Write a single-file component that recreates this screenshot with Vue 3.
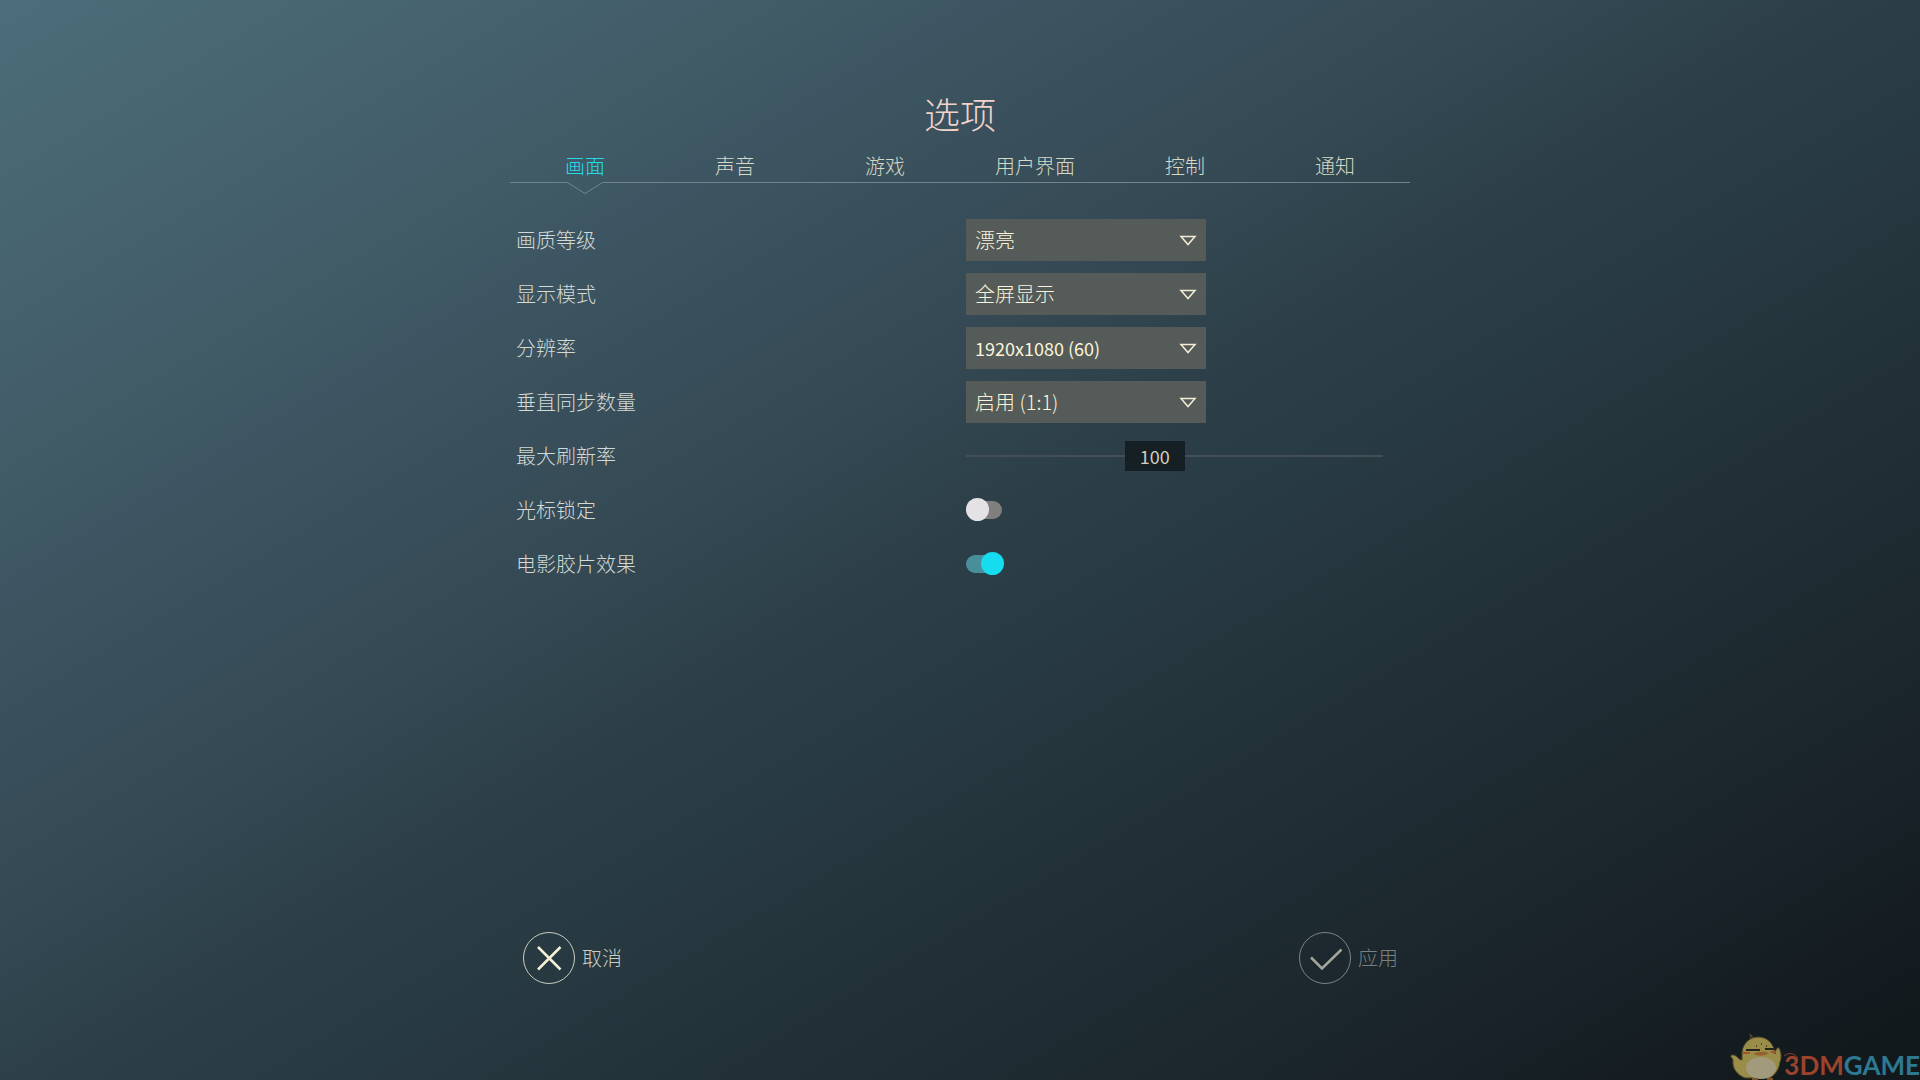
<script setup>
import { ref } from 'vue'

const tabs = ['画面', '声音', '游戏', '用户界面', '控制', '通知']
const activeTab = ref('画面')

const selects = ref([
  { id: 'quality', label: '画质等级', value: '漂亮', options: ['漂亮'] },
  { id: 'mode', label: '显示模式', value: '全屏显示', options: ['全屏显示'] },
  { id: 'resolution', label: '分辨率', value: '1920x1080 (60)', options: ['1920x1080 (60)'], numeric: true },
  { id: 'vsync', label: '垂直同步数量', value: '启用 (1:1)', options: ['启用 (1:1)'] },
])

const minRate = 20
const maxRate = 200
const rate = ref(100)

const toggles = ref([
  { id: 'cursor-lock', label: '光标锁定', on: false },
  { id: 'film-effect', label: '电影胶片效果', on: true },
])
</script>

<template>
  <main class="page">
    <div class="panel">
      <h1 class="title">选项</h1>

      <nav class="tabs">
        <button
          v-for="tab in tabs"
          :key="tab"
          type="button"
          class="tab"
          :class="{ active: tab === activeTab }"
          @click="activeTab = tab"
        >
          <span class="tab-text">{{ tab }}</span>
          <span class="rule">
            <span class="line"></span>
            <svg v-if="tab === activeTab" class="notch" viewBox="0 0 38 14" aria-hidden="true">
              <path d="M0 .5H1.500L19 11.500L36.500 .5H38" />
            </svg>
            <span v-else class="line"></span>
            <span class="line"></span>
          </span>
        </button>
      </nav>

      <form class="settings" @submit.prevent>
        <div v-for="item in selects" :key="item.id" class="row">
          <label class="label" :for="item.id">{{ item.label }}</label>
          <div class="dropdown">
            <select :id="item.id" v-model="item.value" :class="{ numeric: item.numeric }">
              <option v-for="option in item.options" :key="option">{{ option }}</option>
            </select>
            <svg class="caret" viewBox="0 0 18 12" aria-hidden="true">
              <path d="M2 2.500H16L9 10.500Z" />
            </svg>
          </div>
        </div>

        <div class="row">
          <label class="label" for="rate">最大刷新率</label>
          <div class="slider" :style="{ '--pos': (rate - minRate) / (maxRate - minRate) }">
            <input id="rate" v-model.number="rate" type="range" :min="minRate" :max="maxRate" />
            <output for="rate">{{ rate }}</output>
          </div>
        </div>

        <div v-for="item in toggles" :key="item.id" class="row">
          <label class="label" :for="item.id">{{ item.label }}</label>
          <input :id="item.id" v-model="item.on" class="toggle" type="checkbox" />
        </div>
      </form>

      <footer class="actions">
        <button type="button" class="action">
          <svg viewBox="0 0 52 52" aria-hidden="true">
            <circle cx="26" cy="26" r="25.500" />
            <path class="mark" d="M15 15L37.500 37.500M37.500 15L15 37.500" />
          </svg>
          <span>取消</span>
        </button>
        <button type="button" class="action" disabled>
          <svg viewBox="0 0 52 52" aria-hidden="true">
            <circle cx="26" cy="26" r="25.500" />
            <path class="mark" d="M12 25.500L23 36.500L42.500 17.500" />
          </svg>
          <span>应用</span>
        </button>
      </footer>
    </div>

    <div class="brand">
      <svg class="chick" viewBox="0 0 54 46" aria-hidden="true">
        <path d="M21 5C20 2 22 1 19 0M23 4L21 1" fill="none" stroke="#6b5a3c" stroke-width="1" />
        <path
          d="M12 26C9 26 8 23 6 22C3 20 0 21 1 23C2 24 3 25 3 27C2 34 7 41 15 44L40 44C46 40 49 35 50 28C52 24 51 17 49 14C47 13 45 17 45 20C44 9 37 3 28 3C19 3 13 10 12 18Z"
          fill="#9a8d49"
          stroke="#4b4225"
        />
        <ellipse cx="31" cy="34" rx="15" ry="11" fill="#a19a7c" />
        <path d="M16 16H30M35 15H44" stroke="#25241b" stroke-width="2" />
        <path d="M13 19H20M41 18H46" stroke="#a8512c" stroke-width="2" />
        <path d="M23 20Q31 16 39 19Q32 24 23 20Z" fill="#94602b" />
        <path d="M26 12H27M31 10H32M36 12H37" stroke="#54462a" stroke-width="2" />
        <path d="M22 45H28M37 45H43" stroke="#7b5527" stroke-width="2" />
      </svg>
      <span class="brand-text"><span class="red">3DM</span><span class="blue">GAME</span></span>
      <svg class="arc" viewBox="0 0 16 8" aria-hidden="true">
        <path d="M1 4Q8 -2 15 6" />
      </svg>
    </div>
  </main>
</template>

<style>
body {
  margin: 0;
  background: #11181b;
}
</style>

<style scoped>
.page {
  position: relative;
  box-sizing: border-box;
  min-height: 100vh;
  padding: 86px 24px 96px;
  display: flex;
  justify-content: center;
  overflow: hidden;
  color: #d3d9d5;
  font: 300 20px/32px "Noto Sans CJK SC", sans-serif;
  background: linear-gradient(
    149deg,
    #4c6d7a 0%,
    #435e6a 18%,
    #3b525f 30%,
    #344953 41%,
    #2c3f49 50%,
    #26373f 60%,
    #202e35 71%,
    #1b262c 82%,
    #151d22 92%,
    #11171a 100%
  );
}

button,
select,
input {
  margin: 0;
  padding: 0;
  border: 0;
  font: inherit;
  color: inherit;
  background: none;
}

.panel {
  width: 100%;
  max-width: 900px;
  display: flex;
  flex-direction: column;
}

.title {
  margin: 0;
  text-align: center;
  font-size: 36px;
  font-weight: 300;
  line-height: 54px;
  color: #f0d3ca;
}

.tabs {
  display: flex;
}

.tab {
  flex: 1;
  padding-top: 10px;
  display: flex;
  flex-direction: column;
  color: #d5d8c6;
}

.tab-text {
  width: 100%;
  text-align: center;
}

.active {
  color: #22dcea;
}

.rule {
  width: 100%;
  height: 14px;
  display: grid;
  grid-template-columns: 1fr 38px 1fr;
}

.line {
  height: 1px;
  background: #71858c;
}

.notch {
  width: 38px;
  height: 14px;
  fill: none;
  stroke: #71858c;
}

.settings {
  margin-top: 17px;
}

.row {
  height: 54px;
  padding-left: 6px;
  display: grid;
  grid-template-columns: 450px 1fr;
  align-items: center;
}

.dropdown {
  width: 240px;
  height: 42px;
  display: grid;
  align-items: center;
  background: #545b59;
  color: #fbf4da;
}

.dropdown select {
  grid-area: 1 / 1;
  width: 100%;
  height: 42px;
  padding-left: 9px;
  appearance: none;
}

.dropdown .numeric {
  font-size: 18px;
  font-weight: 400;
}

.dropdown option {
  background: #545b59;
}

.caret {
  grid-area: 1 / 1;
  justify-self: end;
  margin-right: 9px;
  width: 18px;
  height: 12px;
  fill: none;
  stroke: #f3ecd2;
  stroke-width: 1.500;
  pointer-events: none;
}

.slider {
  position: relative;
  width: 417px;
  height: 30px;
  font-size: 18px;
  font-weight: 400;
  color: #d2cfbb;
}

.slider input {
  display: block;
  width: 100%;
  height: 30px;
  appearance: none;
  background: linear-gradient(#434f54, #434f54) center / 100% 2px no-repeat;
}

.slider input::-webkit-slider-thumb {
  appearance: none;
  width: 60px;
  height: 30px;
  border-radius: 0;
  background: #161f24;
}

.slider output {
  position: absolute;
  top: 0;
  left: calc((100% - 60px) * var(--pos));
  width: 60px;
  line-height: 30px;
  text-align: center;
  pointer-events: none;
}

.toggle {
  position: relative;
  appearance: none;
  width: 36px;
  height: 18px;
  border-radius: 9px;
  background: #807f7e;
}

.toggle::before {
  content: "";
  position: absolute;
  top: -3px;
  left: 0;
  width: 23px;
  height: 23px;
  border-radius: 50%;
  background: #e4e2e5;
}

.toggle:checked {
  background: #498f9a;
}

.toggle:checked::before {
  left: 15px;
  background: #16dcef;
}

.actions {
  margin-top: auto;
  padding: 0 12px 0 13px;
  display: flex;
  justify-content: space-between;
}

.action {
  display: flex;
  align-items: center;
  gap: 7px;
  color: #cacdc0;
}

.action svg {
  width: 52px;
  height: 52px;
  fill: none;
  stroke: #c9cdbf;
}

.action .mark {
  stroke: #f6f1d6;
  stroke-width: 2.500;
}

.action:disabled {
  color: #79817f;
}

.action:disabled svg {
  stroke: #7b8483;
}

.action:disabled .mark {
  stroke: #a5a69b;
}

.brand {
  position: absolute;
  right: 0;
  bottom: 0;
  display: flex;
  align-items: flex-end;
}

.chick {
  width: 54px;
  height: 46px;
}

.brand-text {
  font: 700 26px/30px Lato, sans-serif;
}

.red {
  color: #9c432c;
}

.blue {
  color: #2d7992;
}

.arc {
  position: absolute;
  left: 53px;
  top: 18px;
  width: 16px;
  height: 8px;
  fill: none;
  stroke: #8a3c2c;
}
</style>
